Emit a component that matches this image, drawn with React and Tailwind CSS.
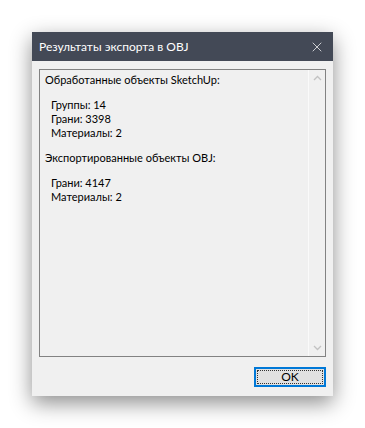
import { X } from "lucide-react";

const font = { fontFamily: 'Lato, "Noto Sans", sans-serif' };

export default function App() {
  return (
    <div className="w-[365px] h-[428px] bg-white pt-[32px] pl-[32px]" style={font}>
      <div className="w-[301px] h-[364px] flex flex-col bg-[#f0f0f0] shadow-[0_7px_20px_rgba(0,0,0,0.45)]">
        {/* Title bar */}
        <div className="h-[30px] bg-[#434956] flex items-center justify-between pl-[7px] pr-[8px]">
          <span className="text-[12px] text-white leading-none">Результаты экспорта в OBJ</span>
          <X className="w-[16px] h-[16px] text-white" strokeWidth={1.1} />
        </div>

        {/* Body */}
        <div className="flex-1 flex flex-col px-[7px] pt-[8px] pb-[9px]">
          <div className="h-[288px] border border-[#828282] flex">
            <div className="flex-1 pl-[5px] pt-[3px] text-[11px] leading-[14px] text-black">
              <div>Обработанные объекты SketchUp:</div>
              <div className="mt-[11px] pl-[6px]">
                <div>Группы: 14</div>
                <div>Грани: 3398</div>
                <div>Материалы: 2</div>
              </div>
              <div className="mt-[11px]">Экспортированные объекты OBJ:</div>
              <div className="mt-[11px] pl-[6px]">
                <div>Грани: 4147</div>
                <div>Материалы: 2</div>
              </div>
            </div>
            <div className="w-[17px] border-l border-[#fafafa] flex flex-col justify-between items-center py-[5px]">
              <svg width="9" height="6" viewBox="0 0 9 6">
                <path d="M1 5 L4.5 1.5 L8 5" fill="none" stroke="#c2c2c2" strokeWidth="1.3" />
              </svg>
              <svg width="9" height="6" viewBox="0 0 9 6">
                <path d="M1 1 L4.5 4.5 L8 1" fill="none" stroke="#c2c2c2" strokeWidth="1.3" />
              </svg>
            </div>
          </div>
          <div className="flex justify-end mt-[10px]">
            <button className="w-[72px] h-[20px] border-2 border-[#0078d7] bg-[#e1e1e1] p-[1px]">
              <div className="w-full h-full border border-dotted border-[#333] flex items-center justify-center text-[12px] font-normal text-black leading-none">
                OK
              </div>
            </button>
          </div>
        </div>
      </div>
    </div>
  );
}
